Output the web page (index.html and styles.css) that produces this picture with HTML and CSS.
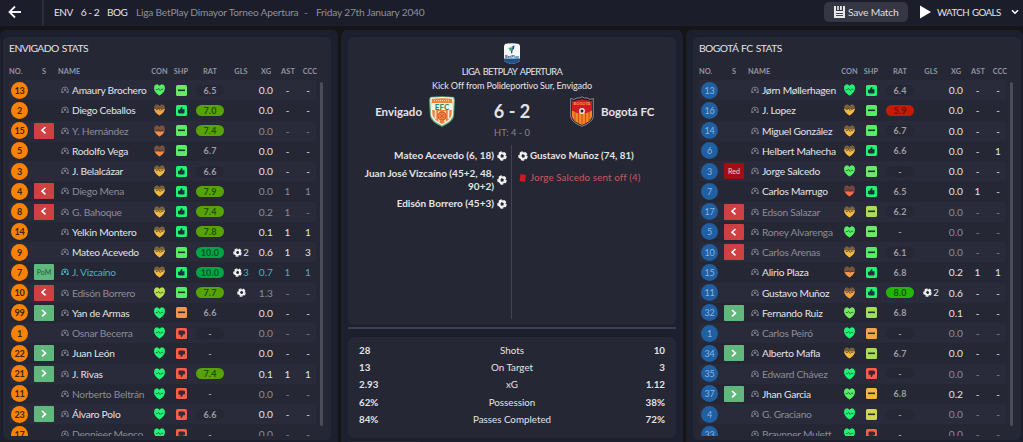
FILE: index.html
```html
<!DOCTYPE html>
<html lang="en">
  <head>
    <meta charset="utf-8">
    <title>Envigado 6 - 2 Bogotá FC</title>
    <link rel="stylesheet" href="styles.css">
  </head>
  <body>
    <svg class="defs" width="0" height="0">
      <symbol id="ball" viewBox="0 0 10 10">
        <circle cx="5" cy="5" r="3.7" fill="#f4f4f5"/>
        <circle cx="5" cy="5" r="4" fill="none" stroke="#f4f4f5" stroke-width="1.5" stroke-dasharray="3.2 1.8"/>
        <path d="M4.6 3 6.8 4.3 6.4 6.4 4.500 6.800 3.300 5Z" fill="#252735"/>
      </symbol>
      <symbol id="person" viewBox="0 0 8 8">
        <path d="M.8 7V4.2a3.2 3.2 0 0 1 6.4 0V7" fill="none" stroke="currentColor" stroke-width="1"/>
        <circle cx="4" cy="3.8" r="1.3" fill="currentColor"/>
        <path d="M1 7V5.300h1.600V7ZM5.400 7V5.300H7V7Z" fill="currentColor"/>
      </symbol>
    </svg>

    <div class="topbar">
      <div class="back">
        <svg width="14" height="14" viewBox="0 0 14 14"><path d="M13 7H2M7 1.5 1.5 7 7 12.5" fill="none" stroke="#f2f2f3" stroke-width="1.8"/></svg>
      </div>
      <div class="result"><span>ENV</span><span class="goals">6 - 2</span><span>BOG</span></div>
      <div class="competition">Liga BetPlay Dimayor Torneo Apertura</div>
      <div class="dash">-</div>
      <div class="date">Friday 27th January 2040</div>
      <button class="save">
        <svg width="11" height="12" viewBox="0 0 11 12"><path d="M0 0h2v5h7V0h2v12H0Z" fill="#e8e8ea"/><path d="M3.2 0h1.6v4H3.2ZM6 0h1.8v4H6Z" fill="#e8e8ea"/><path d="M2 5h7v7H2Z" fill="#e8e8ea"/><path d="M2 7.5h7M2 9.5h7" stroke="#454754"/></svg>
        <span>Save Match</span>
      </button>
      <div class="watch">
        <svg width="11" height="14" viewBox="0 0 11 14"><path d="M0 .5 11 7 0 13.5Z" fill="#fff"/></svg>
        <span>WATCH GOALS</span>
        <svg class="chevron" width="8" height="6" viewBox="0 0 8 6"><path d="m1 1.2 3 3 3-3" fill="none" stroke="#fff" stroke-width="1.6"/></svg>
      </div>
    </div>

    <div class="content">
      <div class="panel home">
        <div class="card stats">
          <h2>ENVIGADO STATS</h2>
          <div class="line head"><span>NO.</span><span>S</span><span>NAME</span><span>CON</span><span>SHP</span><span>RAT</span><span>GLS</span><span>XG</span><span>AST</span><span>CCC</span></div>
          <div class="list" id="home"></div>
          <div class="scrollbar"></div>
        </div>
      </div>

      <div class="panel match">
        <div class="card summary">
          <svg class="league" width="16" height="21" viewBox="0 0 16 21">
            <path d="M1 1Q8-.4 15 1L16 3V18Q12 20.5 8 21 4 20.5 0 18V3Z" fill="#f5f6f8"/>
            <path d="M0 15.5H16V18Q12 20.5 8 21 4 20.5 0 18Z" fill="#1d5388"/>
            <path d="M4.5 5 8 4 8.5 7 6 8Z" fill="#32a57b"/><path d="M8.5 3 10.5 2.5 10 5.5 8 8Z" fill="#1b4778"/><path d="M6 4 8.2 3.4 7.5 5.2Z" fill="#eab540"/><path d="M7 7.5h1.5l-.3 3H7.2Z" fill="#1b4778"/>
            <text x="8" y="14.6" text-anchor="middle" class="league-text">BetPlay</text>
          </svg>
          <div class="league-name">LIGA BETPLAY APERTURA</div>
          <div class="venue">Kick Off from Polideportivo Sur, Envigado</div>
          <div class="score">
            <div class="team left">
              <span>Envigado</span>
              <svg width="26" height="31" viewBox="0 0 26 31">
                <path d="M1 1Q13-.5 25 1L26 4 25 20Q24 26 13 31 2 26 1 20L0 4Z" fill="#58ac73"/>
                <path d="M1.8 1.6Q13 .4 24.2 1.6L24.8 4 24 19.5Q23 25 13 29.5 3 25 2 19.5L1.2 4Z" fill="#f6efe4"/>
                <path d="M3 3Q13 1.6 23 3L23.3 6 22.5 19Q21.6 23.6 13 28 4.4 23.6 3.5 19L2.7 6Z" fill="#ef813e"/>
                <path d="M6.5 14v9M10 15v11M16 15v11M19.5 14v9" stroke="#f7e6d4" stroke-width="1.5"/>
                <path d="M3 7h20v7H3Z" fill="#f6f4ea"/>
                <path d="M5 4.7h16" stroke="#f8dcc4" stroke-dasharray="1 1"/>
                <circle cx="13" cy="20" r="4" fill="#ef813e" stroke="#d35b26"/><path d="m11 18 4 4m0-4-4 4" stroke="#c9532a" stroke-width=".8"/>
                <text x="13" y="13.6" text-anchor="middle" class="efc">EFC</text>
              </svg>
            </div>
            <div class="goals">6 - 2</div>
            <div class="team right">
              <svg width="24" height="31" viewBox="0 0 24 31">
                <path d="M.7 2.5Q4 4.5 7 2 10 2.5 12 .7 14 2.5 17 2q3 2.5 6.3.5V20q0 6-11.3 10.3Q.7 26 .7 20Z" fill="#221f2a" stroke="#a8a1a5" stroke-width=".8"/>
                <path d="M2 5Q5 5.5 7.5 4 10 4.5 12 3q2 1.5 4.5 1Q19 5.5 22 5V15H2Z" fill="#cf1a2a"/>
                <path d="M2 14H22V20q0 5-10 9Q2 25 2 20Z" fill="#f28b24"/>
                <path d="M5 15v10M8.5 16v11M12 18v11M15.5 16v11M19 15v10" stroke="#d74a25" stroke-width="1.1"/>
                <path d="M2 12H22v2.500L17 17H7L2 14.500Z" fill="#cf1a2a"/>
                <circle cx="12" cy="15" r="2.900" fill="#eee"/><path d="m12 13.3 1.6 1.2-.6 1.9h-2l-.6-1.9Z" fill="#222"/>
                <text x="12" y="9.3" text-anchor="middle" class="bfc">BOGOTÁ</text>
              </svg>
              <span>Bogotá FC</span>
            </div>
          </div>
          <div class="halftime">HT: 4 - 0</div>
          <div class="events">
            <div class="side home-events">
              <div class="event"><span>Mateo Acevedo (6, 18)</span><svg width="10" height="10"><use href="#ball"/></svg></div>
              <div class="event tall"><span>Juan José Vizcaíno (45+2, 48,<br>90+2)</span><svg width="10" height="10"><use href="#ball"/></svg></div>
              <div class="event"><span>Edisón Borrero (45+3)</span><svg width="10" height="10"><use href="#ball"/></svg></div>
            </div>
            <div class="side away-events">
              <div class="event"><svg width="10" height="10"><use href="#ball"/></svg><span>Gustavo Muñoz (74, 81)</span></div>
              <div class="event sent-off"><svg width="10" height="10" viewBox="0 0 10 10"><path d="M2.5 1 8 2 7 9 1.5 8Z" fill="#d31620"/></svg><span>Jorge Salcedo sent off (4)</span></div>
            </div>
          </div>
        </div>
        <div class="splitter"></div>
        <div class="card totals">
          <div><b>28</b><span>Shots</span><b>10</b></div>
          <div><b>13</b><span>On Target</span><b>3</b></div>
          <div><b>2.93</b><span>xG</span><b>1.12</b></div>
          <div><b>62%</b><span>Possession</span><b>38%</b></div>
          <div><b>84%</b><span>Passes Completed</span><b>72%</b></div>
        </div>
        <div class="next-tab"></div>
      </div>

      <div class="panel away">
        <div class="card stats">
          <h2>BOGOTÁ FC STATS</h2>
          <div class="line head"><span>NO.</span><span>S</span><span>NAME</span><span>CON</span><span>SHP</span><span>RAT</span><span>GLS</span><span>XG</span><span>AST</span><span>CCC</span></div>
          <div class="list" id="away"></div>
          <div class="scrollbar"></div>
        </div>
      </div>
    </div>

    <script src="players.js"></script>
  </body>
</html>
```
FILE: styles.css
```css
* {
  box-sizing: border-box;
}

body {
  margin: 0;
  height: 442px;
  overflow: hidden;
  background: #151515;
  color: #e3e3e6;
  font-family: Lato, "Liberation Sans", sans-serif;
  font-size: 10.5px;
}

svg {
  display: block;
  flex: none;
}

.defs {
  position: absolute;
}

/* Top bar */
.topbar {
  display: flex;
  align-items: center;
  height: 26px;
  padding-bottom: 3px;
  background: #1b1d2b;
  white-space: nowrap;
}

.topbar > * {
  flex: none;
}

.back {
  width: 44px;
  height: 26px;
  margin-bottom: -3px;
  padding: 5px 0 0 8px;
  border-right: 2px solid #2b2d3a;
}

.result {
  display: flex;
  align-items: center;
  width: 92px;
  padding-left: 10px;
  font-size: 10px;
  letter-spacing: -0.5px;
}

.result .goals {
  width: 22px;
  margin-left: 7px;
  text-align: center;
  font-size: 10.3px;
  letter-spacing: -0.5px;
}

.result span:first-child {
  width: 18px;
}

.result span:last-child {
  margin-left: 6px;
}

.competition,
.dash,
.date {
  color: #8d8e97;
  font-size: 10.2px;
  letter-spacing: -0.22px;
}

.competition {
  width: 168px;
}

.dash {
  width: 12px;
}

.save {
  display: flex;
  align-items: center;
  gap: 3px;
  width: 84px;
  height: 20px;
  margin: 0 12px 0 auto;
  padding: 0 0 0 10px;
  border: 0;
  border-radius: 5px;
  background: #353745;
  color: #dedee2;
  font: 10.3px Lato, sans-serif;
  letter-spacing: -0.2px;
}

.watch {
  display: flex;
  align-items: center;
  width: 103px;
  font-size: 9.7px;
  letter-spacing: -0.55px;
  word-spacing: 1px;
}

.watch span {
  width: 74px;
  margin-left: 6px;
}

/* Panels */
.content {
  display: flex;
  gap: 3px;
  padding-top: 4px;
}

.panel {
  height: 412px;
  padding: 7px 7px 0;
  border-radius: 6px 6px 0 0;
  background: #1c1f2e;
}

.home {
  width: 338px;
  padding-left: 3px;
}

.match {
  width: 342px;
}

.away {
  width: 337px;
  padding-right: 2px;
}

.card {
  border-radius: 6px;
  background: #252735;
}

/* Player tables */
.stats {
  position: relative;
  height: 403px;
  padding: 0 6px;
}

h2 {
  height: 25px;
  margin: 0;
  padding-top: 5px;
  font-size: 10.3px;
  font-weight: 400;
  line-height: 13px;
  letter-spacing: -0.55px;
  word-spacing: 1px;
}

.line {
  display: grid;
  grid-template-columns: 21px 28px 14px 76px 23px 20px 38px 24px 22px 25px 16px;
  align-items: center;
  justify-items: center;
  width: 307px;
  height: 20.25px;
  border-radius: 3px;
  white-space: nowrap;
}

.head {
  grid-template-columns: 21px 28px 90px 23px 20px 38px 24px 26px 18px 26px;
  height: 18px;
  color: #9394a0;
  font-size: 7.4px;
  font-weight: 700;
  letter-spacing: 0.05px;
}

.head span:first-child,
.head span:nth-child(3) {
  justify-self: start;
}

.list {
  height: 356px;
  overflow: hidden;
}

.list .line:nth-child(odd) {
  background: #292b3a;
}

.number {
  width: 17px;
  height: 17px;
  border-radius: 50%;
  background: #fb8203;
  color: #34291f;
  font-size: 9px;
  font-weight: 700;
  line-height: 17px;
  text-align: center;
  letter-spacing: -0.2px;
}

#away .number {
  background: #205fa2;
  color: #8bb4df;
  font-weight: 400;
}

.status {
  display: flex;
  align-items: center;
  justify-content: center;
  width: 20px;
  height: 16px;
  border-radius: 1px;
  font-size: 7px;
}

.off {
  background: #cf4043;
}

.on {
  background: #61b77c;
}

.pom {
  background: #61b77c;
  color: #29563e;
}

.red {
  background: #a20f10;
  color: #f0dada;
}

.person {
  color: #777985;
}

.name {
  justify-self: start;
  font-size: 10.2px;
  letter-spacing: -0.25px;
}

.rating {
  width: 28px;
  height: 11px;
  border-radius: 6px;
  background: #252735;
  color: #9c9da6;
  font-size: 9px;
  font-weight: 700;
  line-height: 11px;
  letter-spacing: 0.2px;
  text-align: center;
}

.good {
  background: #57a303;
  color: #244d10;
}

.great {
  background: #25b506;
  color: #145609;
}

.perfect {
  background: #00a545;
  color: #065329;
}

.poor {
  background: #c51b02;
  color: #651512;
}

.gls {
  display: flex;
  align-items: center;
  gap: 1px;
  font-size: 9.5px;
}

.xg {
  justify-self: end;
  padding-right: 2px;
  font-size: 10.2px;
}

.ast,
.ccc {
  font-size: 10px;
}

.dim .name,
.dim .xg,
.dim .ast,
.dim .ccc {
  color: #8b8c95;
}

.best .name,
.best .person,
.best .gls span,
.best .xg,
.best .ast,
.best .ccc {
  color: #42b3c4;
}

.scrollbar {
  position: absolute;
  top: 45px;
  right: 8px;
  width: 3px;
  height: 344px;
  border-radius: 2px;
  background: #4a4c58;
}

/* Match summary */
.summary {
  display: flex;
  flex-direction: column;
  align-items: center;
  height: 288px;
  padding-top: 6px;
}

.league-text {
  fill: #1b4778;
  font-size: 4px;
  font-weight: 700;
}

.league-name {
  margin-top: 1px;
  font-size: 9.3px;
  line-height: 14px;
  letter-spacing: -0.6px;
  word-spacing: 1.5px;
}

.venue {
  font-size: 9.1px;
  line-height: 13px;
  letter-spacing: -0.15px;
}

.score {
  display: grid;
  flex: none;
  grid-template-columns: 107px 114px 107px;
  align-items: center;
  height: 34px;
  margin-top: 2px;
}

.score .goals {
  font-size: 18px;
  font-weight: 700;
  text-align: center;
}

.team {
  display: flex;
  align-items: center;
  gap: 7px;
  font-size: 11.5px;
  font-weight: 700;
  white-space: nowrap;
}

.left {
  justify-content: flex-end;
}

.right {
  padding-left: 1px;
}

.efc {
  fill: #279451;
  font-size: 8px;
  font-weight: 900;
}

.bfc {
  fill: #f2a530;
  font-size: 4px;
  font-weight: 700;
}

.halftime {
  margin-top: -2px;
  color: #858690;
  font-size: 9.3px;
  line-height: 13px;
}

.events {
  display: flex;
  flex: none;
  width: 100%;
  height: 174px;
  margin-top: 6px;
}

.side {
  width: 50%;
}

.home-events {
  border-right: 1px solid #424453;
}

.event {
  display: flex;
  align-items: center;
  gap: 2px;
  height: 21px;
  font-size: 9.8px;
  font-weight: 700;
  line-height: 13px;
  white-space: nowrap;
}

.home-events .event {
  gap: 3px;
  justify-content: flex-end;
  padding-right: 4px;
  font-size: 10px;
  text-align: right;
}

.away-events .event {
  padding-left: 6px;
}

.home-events .tall {
  height: 27px;
}

.away-events .sent-off {
  margin-top: 1px;
  color: #c8595d;
  font-weight: 400;
  letter-spacing: 0.1px;
}

.splitter {
  height: 2px;
  margin-top: 2px;
  background: #3d4051;
}

.totals {
  height: 101px;
  margin-top: 8px;
  padding: 4px 11px;
}

.totals div {
  display: grid;
  grid-template-columns: 60px 1fr 60px;
  align-items: center;
  height: 17.4px;
  font-size: 9.8px;
}

.totals span {
  text-align: center;
}

.totals b:last-child {
  text-align: right;
}

.next-tab {
  width: 72px;
  height: 1px;
  margin-top: 3px;
  background: #252735;
}
```
FILE: players.js
```js
// number, status, name, heart colour, heart level, sharpness, rating, goals, xg, ast, ccc, row style
var G = '#1ff573', L = '#55ee65', Y = '#f4b941', O = '#fa8d45', R = '#fb5d48';

var home = [
  [13, '', 'Amaury Brochero', L, 0, ['#6de968', 'bar'], '6.5', 0, '0.0', '-', '-', ''],
  [2, '', 'Diego Ceballos', '#f7a047', 5, [G, 'up'], '7.0', 0, '0.0', '-', '-', ''],
  [15, 'off', 'Y. Hernández', O, 6.5, [L, 'bar'], '7.4', 0, '0.0', '-', '-', 'dim'],
  [5, '', 'Rodolfo Vega', O, 6.5, [L, 'bar'], '6.7', 0, '0.0', '-', '-', ''],
  [3, '', 'J. Belalcázar', Y, 4.5, [G, 'up'], '6.6', 0, '0.0', '-', '-', ''],
  [4, 'off', 'Diego Mena', Y, 4.5, [G, 'up'], '7.9', 0, '0.0', '1', '1', 'dim'],
  [8, 'off', 'G. Bahoque', Y, 4.5, [G, 'up'], '7.4', 0, '0.2', '1', '-', 'dim'],
  [14, '', 'Yelkin Montero', Y, 4.5, [G, 'up'], '7.8', 0, '0.1', '1', '1', ''],
  [9, '', 'Mateo Acevedo', Y, 4.5, [L, 'bar'], '10.0', 2, '0.6', '1', '3', ''],
  [7, 'pom', 'J. Vizcaíno', Y, 4.5, [G, 'up'], '10.0', 3, '0.7', '1', '1', 'best'],
  [10, 'off', 'Edisón Borrero', '#b9df50', 0, [L, 'bar'], '7.7', 1, '1.3', '-', '-', 'dim'],
  [99, 'on', 'Yan de Armas', G, 0, ['#fa934a', 'bar'], '6.6', 0, '0.0', '-', '-', ''],
  [1, '', 'Osnar Becerra', G, 0, [R, 'down'], '-', 0, '0.0', '-', '-', 'dim'],
  [22, 'on', 'Juan León', G, 0, [R, 'down'], '-', 0, '0.0', '-', '-', ''],
  [21, 'on', 'J. Rivas', G, 0, [R, 'down'], '7.4', 0, '0.1', '1', '1', ''],
  [11, '', 'Norberto Beltrán', G, 0, [R, 'down'], '-', 0, '0.0', '-', '-', 'dim'],
  [23, 'on', 'Álvaro Polo', G, 0, [R, 'down'], '6.6', 0, '0.0', '-', '-', ''],
  [17, '', 'Dennjeer Menco', G, 0, [R, 'down'], '-', 0, '0.0', '-', '-', 'dim']
];

var away = [
  [13, '', 'Jørn Møllerhagen', G, 0, [G, 'up'], '6.4', 0, '0.0', '-', '-', ''],
  [16, '', 'J. Lopez', Y, 5, [L, 'bar'], '5.9', 0, '0.0', '-', '-', ''],
  [14, '', 'Miguel González', Y, 4.5, [L, 'bar'], '6.7', 0, '0.0', '-', '-', ''],
  [6, '', 'Helbert Mahecha', Y, 4.5, [G, 'up'], '6.6', 0, '0.0', '-', '1', ''],
  [3, 'red', 'Jorge Salcedo', L, 0, ['#6de968', 'bar'], '-', 0, '0.0', '-', '-', ''],
  [7, '', 'Carlos Marrugo', '#fa6d48', 6.5, [G, 'up'], '6.5', 0, '0.0', '1', '-', ''],
  [17, 'off', 'Edson Salazar', Y, 4.5, ['#aadd55', 'bar'], '6.2', 0, '0.0', '-', '-', 'dim'],
  [5, 'off', 'Roney Alvarenga', L, 0, ['#6de968', 'bar'], '-', 0, '0.0', '-', '-', 'dim'],
  [10, 'off', 'Carlos Arenas', Y, 4.5, ['#55ee65', 'bar'], '6.1', 0, '0.0', '-', '-', 'dim'],
  [15, '', 'Alirio Plaza', '#f7964a', 6, [G, 'up'], '6.8', 0, '0.2', '1', '1', ''],
  [11, '', 'Gustavo Muñoz', '#f7a047', 4.5, [G, 'up'], '8.0', 2, '0.6', '-', '-', ''],
  [32, 'on', 'Fernando Ruiz', '#78e65e', 0, ['#a2df55', 'bar'], '6.8', 0, '0.1', '-', '-', ''],
  [1, '', 'Carlos Peiró', G, 0, ['#fba344', 'bar'], '-', 0, '0.0', '-', '-', 'dim'],
  [34, 'on', 'Alberto Mafla', Y, 4.5, ['#aadd55', 'bar'], '6.7', 0, '0.0', '-', '-', ''],
  [35, '', 'Edward Chávez', G, 0, [R, 'down'], '-', 0, '0.0', '-', '-', 'dim'],
  [37, 'on', 'Jhan Garcia', L, 0, ['#fbb344', 'bar'], '6.8', 0, '0.2', '-', '-', ''],
  [4, '', 'G. Graciano', G, 0, ['#d0d650', 'bar'], '-', 0, '0.0', '-', '-', 'dim'],
  [33, '', 'Braynner Mulett', G, 0, [R, 'down'], '-', 0, '0.0', '-', '-', 'dim']
];

var HEART = 'M5.5 11.6Q.8 8.4.2 5.2C-.2 2.6.8.5 2.7.4 4 .3 5 1 5.5 2.1 6 1 7 .3 8.3.4 10.2.5 11.2 2.6 10.8 5.2Q10.2 8.4 5.5 11.6Z';
var THUMB = 'M2 4.8h1.7L5.3 2c1-.2 1.4.6 1.1 1.4L6.1 4.2h2.4v3.8L7.4 8.6H3.8L2 7.8Z';

function heart(color, level, id) {
  return '<svg width="11" height="12" viewBox="0 0 11 12">' +
    '<clipPath id="' + id + '"><rect y="' + level + '" width="11" height="12"/></clipPath>' +
    '<path d="' + HEART + '" fill="' + color + '" opacity=".4"/>' +
    '<path d="' + HEART + '" fill="' + color + '" clip-path="url(#' + id + ')"/>' +
    '<path d="M1.8 5.6h1.5L4.6 4.5 6.2 6.5 7.4 5.3h1.8" fill="none" stroke="#2b3440" stroke-width=".7"/></svg>';
}

function sharpness(s) {
  var icon = '<path d="M2 4.5h7v1.6H2Z" fill="#24303a"/>';
  if (s[1] == 'up') icon = '<path d="' + THUMB + '" fill="#20303a"/>';
  if (s[1] == 'down') icon = '<path d="' + THUMB + '" fill="#3a2731" transform="rotate(180 5.5 5.5)"/>';
  return '<svg width="11" height="11" viewBox="0 0 11 11"><rect width="11" height="11" rx="1.5" fill="' + s[0] + '"/>' + icon + '</svg>';
}

function status(s) {
  if (!s) return '<span></span>';
  var inner = { pom: 'PoM', red: 'Red' }[s];
  if (!inner) {
    var d = s == 'off' ? 'M5.5 1 2 4.2 5.5 7.4' : 'M2 1l3.5 3.2L2 7.4';
    inner = '<svg width="7.5" height="8.4"><path d="' + d + '" fill="none" stroke="#fff" stroke-width="1.6"/></svg>';
  }
  return '<span class="status ' + s + '">' + inner + '</span>';
}

function ratingClass(r) {
  if (r == '-') return '';
  if (r >= 10) return 'perfect';
  if (r >= 8) return 'great';
  if (r >= 7) return 'good';
  return r < 6 ? 'poor' : '';
}

function fill(id, players) {
  var html = '';
  players.forEach(function (p, i) {
    var gls = p[7] ? '<svg width="9" height="9"><use href="#ball"/></svg>' + (p[7] > 1 ? '<span>' + p[7] + '</span>' : '') : '';
    html += '<div class="line ' + p[11] + '"><span class="number">' + p[0] + '</span>' + status(p[1]) +
      '<svg class="person" width="8" height="8"><use href="#person"/></svg>' +
      '<span class="name">' + p[2] + '</span>' +
      heart(p[3], p[4], id + i) + sharpness(p[5]) +
      '<span class="rating ' + ratingClass(p[6]) + '">' + p[6] + '</span>' +
      '<span class="gls">' + gls + '</span><span class="xg">' + p[8] + '</span>' +
      '<span class="ast">' + p[9] + '</span><span class="ccc">' + p[10] + '</span></div>';
  });
  document.getElementById(id).innerHTML = html;
}

fill('home', home);
fill('away', away);
```
